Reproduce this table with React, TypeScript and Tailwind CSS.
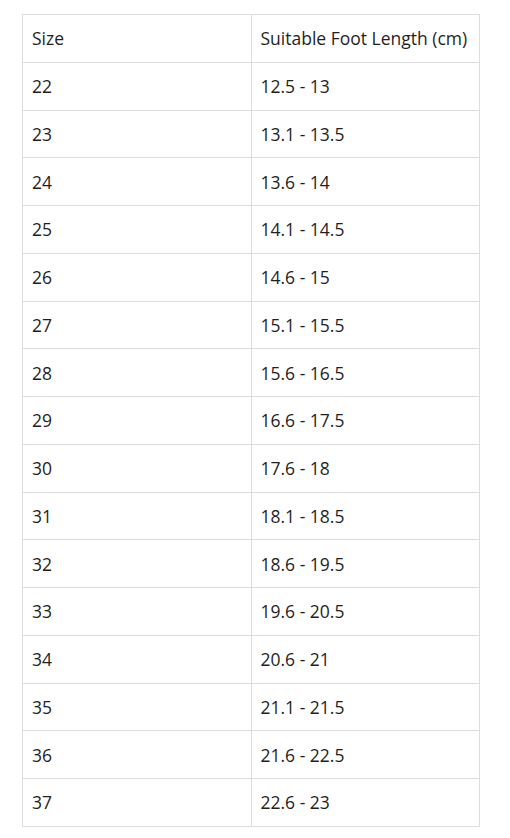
const rows: [string, string][] = [
  ["22", "12.5 - 13"],
  ["23", "13.1 - 13.5"],
  ["24", "13.6 - 14"],
  ["25", "14.1 - 14.5"],
  ["26", "14.6 - 15"],
  ["27", "15.1 - 15.5"],
  ["28", "15.6 - 16.5"],
  ["29", "16.6 - 17.5"],
  ["30", "17.6 - 18"],
  ["31", "18.1 - 18.5"],
  ["32", "18.6 - 19.5"],
  ["33", "19.6 - 20.5"],
  ["34", "20.6 - 21"],
  ["35", "21.1 - 21.5"],
  ["36", "21.6 - 22.5"],
  ["37", "22.6 - 23"],
];

export default function App() {
  return (
    <div className="min-h-[838px] bg-white pt-[14px] pl-[22px] font-['Open_Sans',sans-serif] text-[17.5px] text-[#1f1f1f]">
      <table className="w-[458px] border-collapse table-fixed">
        <tbody>
          <tr>
            <td className="h-[47.76px] border border-[#dddddd] px-[9px] py-0 align-middle">Size</td>
            <td className="h-[47.76px] border border-[#dddddd] px-[9px] py-0 align-middle">
              Suitable Foot Length (cm)
            </td>
          </tr>
          {rows.map(([size, len]) => (
            <tr key={size}>
              <td className="h-[47.76px] border border-[#dddddd] px-[9px] py-0 align-middle">{size}</td>
              <td className="h-[47.76px] border border-[#dddddd] px-[9px] py-0 align-middle">{len}</td>
            </tr>
          ))}
        </tbody>
      </table>
    </div>
  );
}
